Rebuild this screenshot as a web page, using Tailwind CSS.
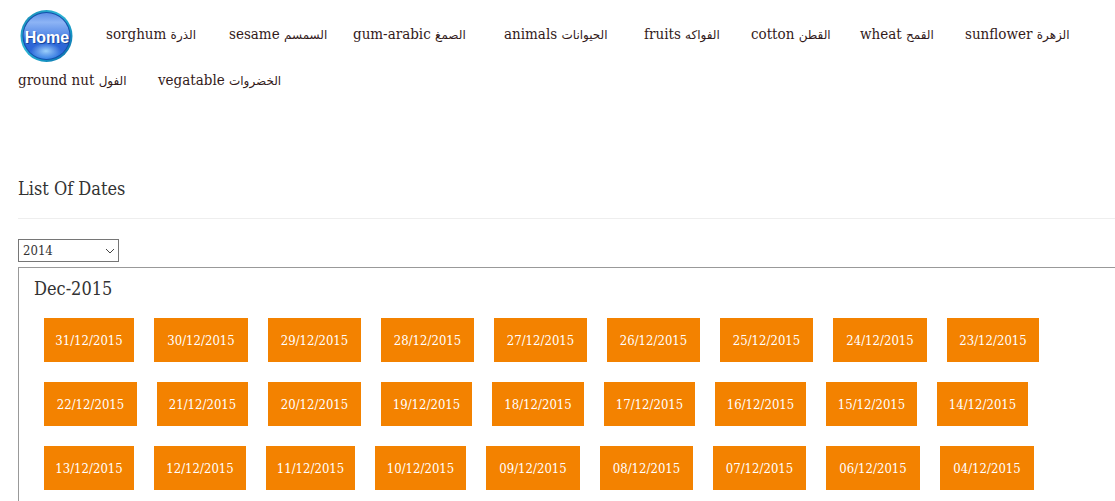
<!DOCTYPE html>
<html lang="en">
<head>
    <meta charset="UTF-8">
    <meta name="viewport" content="width=device-width, initial-scale=1.0">
    <title>List Of Dates</title>
    <script src="https://cdn.jsdelivr.net/npm/@tailwindcss/browser@4"></script>
</head>
<body class="bg-white text-[#333333] font-['Roboto_Slab','DejaVu_Serif_Condensed','DejaVu_Serif',serif] overflow-hidden">
    <!-- Navigation -->
    <nav class="flex flex-wrap items-center gap-x-[33px] pl-[18px] pt-2 text-[15px] leading-5 whitespace-nowrap text-[#331a1a]">
        <a href="#home" class="w-[55px] h-14">
            <svg viewBox="0 0 55 56" class="w-full h-full" role="img" aria-label="Home">
                <defs>
                    <linearGradient id="ball" x1="0" y1="0" x2="0" y2="1">
                        <stop offset="0" stop-color="#5f8fe6"/>
                        <stop offset="0.2" stop-color="#8db4f5"/>
                        <stop offset="0.45" stop-color="#5d8fe8"/>
                        <stop offset="0.58" stop-color="#2f68d6"/>
                        <stop offset="0.8" stop-color="#2d66d8"/>
                        <stop offset="1" stop-color="#3b86e8"/>
                    </linearGradient>
                    <linearGradient id="rim" x1="0" y1="0" x2="1" y2="1">
                        <stop offset="0" stop-color="#0f7fae"/>
                        <stop offset="0.4" stop-color="#2fb6d6"/>
                        <stop offset="0.7" stop-color="#1697c4"/>
                        <stop offset="1" stop-color="#0e5fa4"/>
                    </linearGradient>
                    <radialGradient id="glow" cx="0.5" cy="0.5" r="0.5">
                        <stop offset="0" stop-color="#a9dcff" stop-opacity="0.9"/>
                        <stop offset="1" stop-color="#a9dcff" stop-opacity="0"/>
                    </radialGradient>
                </defs>
                <circle cx="28.500" cy="28" r="26" fill="url(#rim)"/>
                <circle cx="28.500" cy="28" r="24" fill="#1450ac"/>
                <circle cx="28.500" cy="28" r="23" fill="url(#ball)"/>
                <ellipse cx="28" cy="43" rx="15" ry="8" fill="url(#glow)"/>
                <text x="30" y="36" text-anchor="middle" font-family="Liberation Sans, sans-serif" font-weight="bold" font-size="16" fill="#17479c">Home</text>
                <text x="29" y="35" text-anchor="middle" font-family="Liberation Sans, sans-serif" font-weight="bold" font-size="16" fill="#ffffff">Home</text>
            </svg>
        </a>
        <a href="#sorghum" class="w-[90px] pb-1">sorghum <span lang="ar" class="font-['DejaVu_Sans'] text-xs">الذرة</span></a>
        <a href="#sesame" class="w-[91px] pb-1">sesame <span lang="ar" class="font-['DejaVu_Sans'] text-xs">السمسم</span></a>
        <a href="#gum-arabic" class="w-[118px] pb-1">gum-arabic <span lang="ar" class="font-['DejaVu_Sans'] text-xs">الصمغ</span></a>
        <a href="#animals" class="w-[107px] pb-1">animals <span lang="ar" class="font-['DejaVu_Sans'] text-xs">الحيوانات</span></a>
        <a href="#fruits" class="w-[74px] pb-1">fruits <span lang="ar" class="font-['DejaVu_Sans'] text-xs">الفواكه</span></a>
        <a href="#cotton" class="w-[76px] pb-1">cotton <span lang="ar" class="font-['DejaVu_Sans'] text-xs">القطن</span></a>
        <a href="#wheat" class="w-[72px] pb-1">wheat <span lang="ar" class="font-['DejaVu_Sans'] text-xs">القمح</span></a>
        <a href="#sunflower" class="w-[107px] pb-1">sunflower <span lang="ar" class="font-['DejaVu_Sans'] text-xs">الزهرة</span></a>
        <a href="#ground-nut" class="w-[107px] py-1.5">ground nut <span lang="ar" class="font-['DejaVu_Sans'] text-xs">الفول</span></a>
        <a href="#vegatable" class="py-1.5">vegatable <span lang="ar" class="font-['DejaVu_Sans'] text-xs">الخضروات</span></a>
    </nav>

    <main class="pl-[18px] pt-20">
        <h1 class="text-lg leading-[26px] pb-4 border-b border-[#eeeeee]">List Of Dates</h1>

        <div class="relative w-[101px] mt-5">
            <select aria-label="Year" class="block w-full h-[23px] appearance-none border border-[#767676] bg-white pl-1 text-[13px] leading-5">
                <option selected>2014</option>
                <option>2015</option>
            </select>
            <svg viewBox="0 0 10 6" class="absolute right-1 top-[9px] w-[10px] h-[6px] pointer-events-none" fill="none" stroke="#444444">
                <path d="M1 1L5 5L9 1"/>
            </svg>
        </div>

        <!-- Dates of one month -->
        <section class="mt-[5px] border-l border-t border-[#999999] pl-[15px] pt-2">
            <h2 class="text-lg leading-[26px]">Dec-2015</h2>
            <div id="dates" class="flex flex-wrap gap-5 pl-[10px] pt-4 pb-5 text-[13px] leading-5 text-white"></div>
        </section>
    </main>

    <script>
        const widths = {
            89: 'w-[89px]',
            90: 'w-[90px]',
            91: 'w-[91px]',
            92: 'w-[92px]',
            93: 'w-[93px]',
            94: 'w-[94px]'
        };

        // [day, button width]
        const days = [
            ['31', 90], ['30', 94], ['29', 93], ['28', 93], ['27', 93], ['26', 93], ['25', 93], ['24', 94], ['23', 92],
            ['22', 93], ['21', 91], ['20', 93], ['19', 91], ['18', 92], ['17', 91], ['16', 91], ['15', 91], ['14', 91],
            ['13', 90], ['12', 92], ['11', 89], ['10', 91], ['09', 94], ['08', 93], ['07', 93], ['06', 94], ['04', 94]
        ];

        days.forEach(([day, width]) => {
            const button = document.createElement('button');
            button.type = 'button';
            button.className = `h-11 pt-0.5 bg-[#f38200] ${widths[width]}`;
            button.textContent = `${day}/12/2015`;
            document.getElementById('dates').appendChild(button);
        });
    </script>
</body>
</html>
